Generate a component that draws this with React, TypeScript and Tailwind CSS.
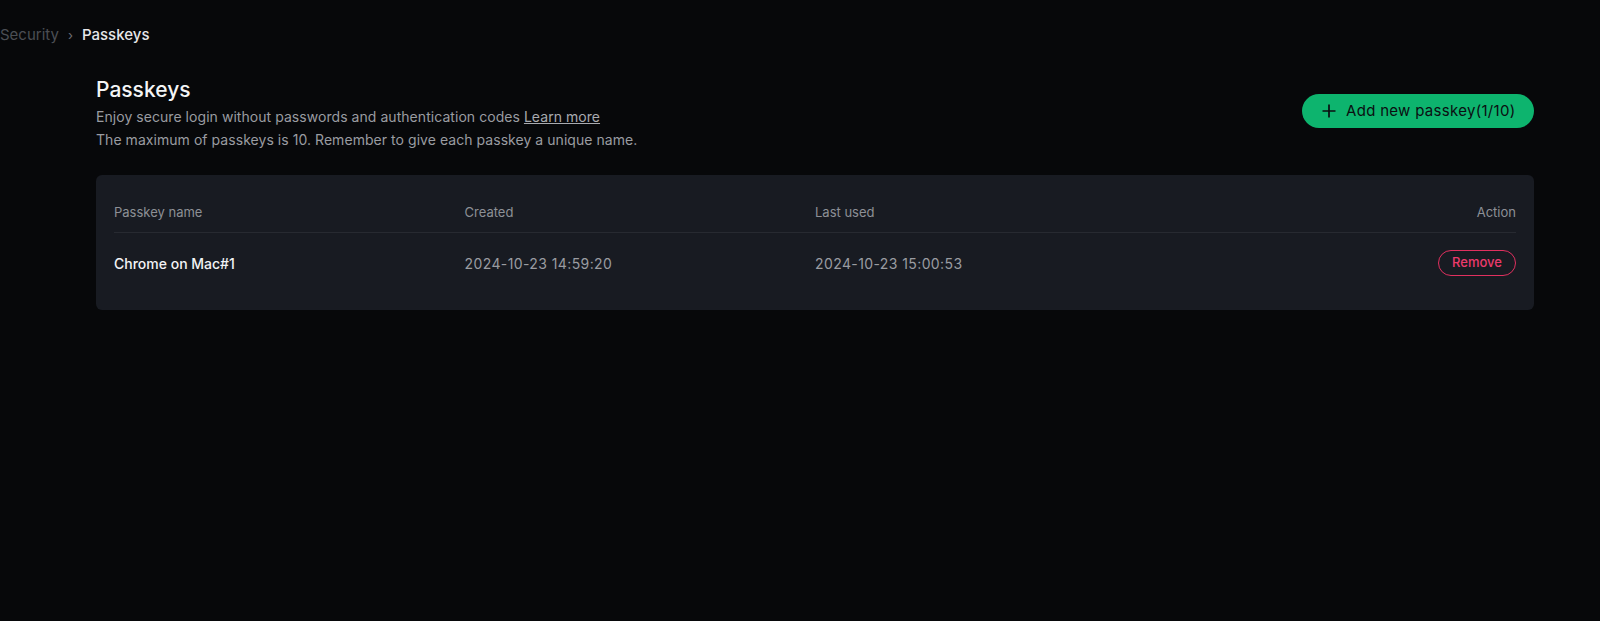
import React from "react";

export default function App() {
  return (
    <div
      className="min-h-[621px] w-full bg-[#07080a] text-white"
      style={{ fontFamily: "Inter, 'Noto Sans', sans-serif" }}
    >
      <div className="flex items-center h-[68px] pt-[3px] text-[15px]">
        <span className="text-[#4b4e54]">Security</span>
        <span className="text-[#6b6e74] mx-[9px] text-[13px]">›</span>
        <span className="text-[#e6e7e9] font-medium">Passkeys</span>
      </div>
      <div className="pl-[96px] pr-[66px]">
        <div className="flex items-start justify-between">
          <div className="mt-[8px]">
            <h1 className="text-[21px] font-medium leading-[28px] text-[#f4f5f6]">Passkeys</h1>
            <p className="text-[14px] tracking-[0.05px] leading-[23px] text-[#9a9ca1] mt-[1px]">
              Enjoy secure login without passwords and authentication codes{" "}
              <span className="underline text-[#a9abb0]">Learn more</span>
            </p>
            <p className="text-[14px] tracking-[0.05px] leading-[23px] text-[#9a9ca1]">
              The maximum of passkeys is 10. Remember to give each passkey a unique name.
            </p>
          </div>
          <button className="mt-[26px] flex items-center h-[34px] w-[232px] rounded-full bg-[#0db46e] pl-[20px] text-[#0b0e11] text-[15px] tracking-[0.3px]">
            <svg width="14" height="14" viewBox="0 0 14 14" className="mr-[10px]">
              <path d="M7 0.5v13M0.5 7h13" stroke="#0b0e11" strokeWidth="1.7" />
            </svg>
            Add new passkey(1/10)
          </button>
        </div>
        <div className="mt-[24px] rounded-[6px] bg-[#181b22] px-[18px] pt-[28px] pb-[17px]">
          <div className="grid grid-cols-4 text-[13px] text-[#8d9096] pb-[9px] border-b border-[#272a31]">
            <div>Passkey name</div>
            <div>Created</div>
            <div>Last used</div>
            <div className="text-right">Action</div>
          </div>
          <div className="grid grid-cols-4 items-center h-[60px] pt-[1px] text-[14px]">
            <div className="text-[#f2f3f5] font-medium">Chrome on Mac#1</div>
            <div className="text-[#9a9ca1] tracking-[0.4px]">2024-10-23 14:59:20</div>
            <div className="text-[#9a9ca1] tracking-[0.4px]">2024-10-23 15:00:53</div>
            <div className="flex justify-end">
              <button className="h-[26px] w-[78px] rounded-full border border-[#e0305f] text-[13px] font-medium text-[#ec3a6c]">
                Remove
              </button>
            </div>
          </div>
        </div>
      </div>
    </div>
  );
}
